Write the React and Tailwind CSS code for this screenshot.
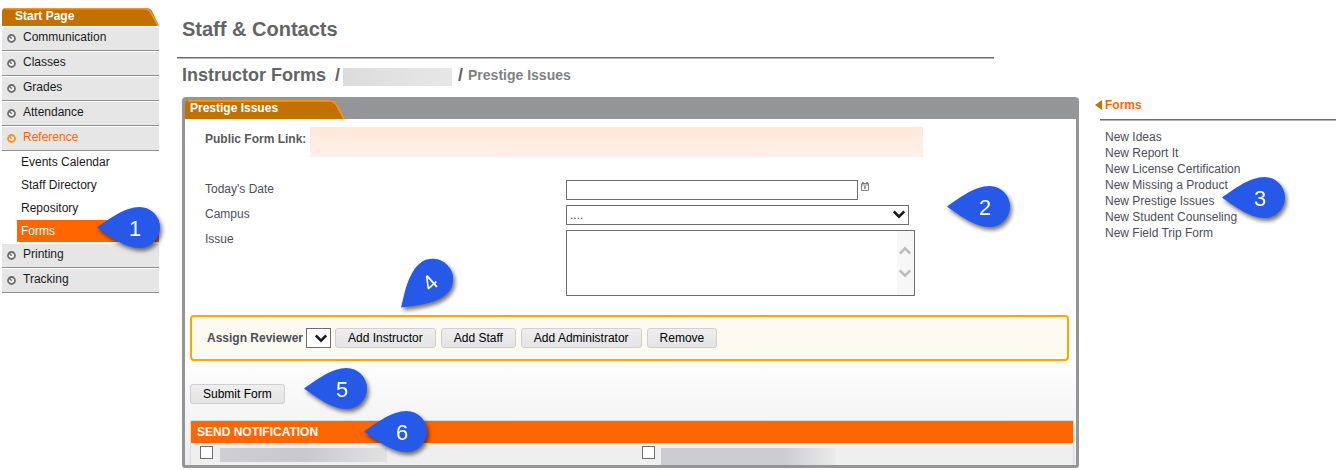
const MENU = [
  { label: 'Communication' },
  { label: 'Classes' },
  { label: 'Grades' },
  { label: 'Attendance' },
  {
    label: 'Reference',
    active: true,
    children: ['Events Calendar', 'Staff Directory', 'Repository', 'Forms'],
  },
  { label: 'Printing' },
  { label: 'Tracking' },
]

const FORMS = [
  'New Ideas',
  'New Report It',
  'New License Certification',
  'New Missing a Product',
  'New Prestige Issues',
  'New Student Counseling',
  'New Field Trip Form',
]

const REVIEWER_ACTIONS = ['Add Instructor', 'Add Staff', 'Add Administrator', 'Remove']

// Numbered callout; the tip is at the left, half way down
function Pin({ number, className, rotate }) {
  return (
    <span className={`absolute z-10 pointer-events-none drop-shadow-[2px_3px_2px_rgba(0,0,0,0.55)] ${className}`}>
      <svg width="63" height="41" viewBox="0 0 63 41" className={`block ${rotate || ''}`}>
        <path
          d="M0 20.5C12 12 28 0 42.5 0a20.5 20.5 0 0 1 0 41C28 41 12 29 0 20.5Z"
          fill="#2659e8"
        />
        <text x="38" y="29" textAnchor="middle" fill="#fff" fontSize="22" fontFamily="'Liberation Sans', sans-serif">
          {number}
        </text>
      </svg>
    </span>
  )
}

function Bullet({ active }) {
  const color = active ? '#f7931e' : '#6d6e71'
  return (
    <svg width="9" height="9" viewBox="0 0 9 9" className="shrink-0">
      <circle cx="4.5" cy="4.5" r="3.5" fill="#f8f8f8" stroke={color} strokeWidth="1.8" />
      <path d="M0 0h2.6L0 2.6Z" fill="#e6e6e6" />
      <path d="M1.6 1.6l3.2 3.2" stroke={color} strokeWidth="1.5" />
    </svg>
  )
}

function Chevron({ className, up }) {
  return (
    <svg width="12" height="9" viewBox="0 0 12 9" className={className}>
      <path
        d={up ? 'M0.8 7.6L6 2.4l5.2 5.2' : 'M0.8 1.4L6 6.6l5.2-5.2'}
        fill="none"
        stroke="currentColor"
        strokeWidth="2.6"
      />
    </svg>
  )
}

function Rule({ className }) {
  return <div className={`h-[2px] border-t border-t-[#6d6e71] bg-[#b4b4b6] ${className || ''}`} />
}

function FormButton({ children, type = 'button' }) {
  return (
    <button
      type={type}
      className="h-5 px-3 rounded-[3px] border border-[#d0d0d2] bg-linear-to-b from-[#eeeeee] to-[#e4e4e4] leading-[18px] text-black whitespace-nowrap"
    >
      {children}
    </button>
  )
}

function Sidebar() {
  return (
    <nav className="w-[157px] shrink-0 pt-2 text-[#1a1a1a]">
      <div className="relative h-[18px]">
        <svg className="absolute inset-0 w-full h-full" viewBox="0 0 157 18" preserveAspectRatio="none">
          <path d="M0 18V4q0-4 4-4h140q4 0 6 3l7 15Z" fill="#c27100" />
          <path d="M3 0.8h139q5 0 7 4l7 13" fill="none" stroke="#f7931e" strokeWidth="1.6" />
        </svg>
        <a href="#start" className="relative block pl-[13px] leading-4 font-bold text-white">Start Page</a>
      </div>
      <ul>
        {MENU.map((item) => (
          <li key={item.label}>
            <a
              href="#menu"
              className={`flex items-center gap-[7px] h-[25px] pl-[5px] border-t border-t-white border-b border-b-[#8f9093] bg-[#e6e6e6] ${item.active ? 'text-[#ff6600]' : ''}`}
            >
              <Bullet active={item.active} />
              <span className="pb-[3px]">{item.label}</span>
            </a>
            {item.children && (
              <ul className="pl-[15px]">
                {item.children.map((child) => (
                  <li key={child} className="relative h-[23px]">
                    <a
                      href="#sub"
                      className={`block h-[22px] pl-1 leading-[22px] ${child === 'Forms' ? 'bg-[#ff6600] text-white' : ''}`}
                    >
                      {child}
                    </a>
                    {child === 'Forms' && <Pin number="1" className="left-20 -top-[13px]" />}
                  </li>
                ))}
              </ul>
            )}
          </li>
        ))}
      </ul>
    </nav>
  )
}

function FieldRow({ id, label, children }) {
  return (
    <div className="flex items-start">
      <label htmlFor={id} className="w-[361px] shrink-0 leading-[18px]">{label}</label>
      {children}
    </div>
  )
}

function FormFields() {
  return (
    <div className="relative flex flex-col gap-[5px] mt-[23px] pl-[15px]">
      <FieldRow id="date" label="Today's Date">
        <input id="date" type="text" className="w-[292px] h-5 px-1 border border-[#6d6e71] bg-white" />
        <svg width="8" height="9" viewBox="0 0 8 9" className="ml-[3px] mt-[2px]">
          <path d="M0.5 1.5h7v7h-7zM0.5 3h7" fill="none" stroke="#808184" />
          <path d="M2 0v2M6 0v2M4 4v3" stroke="#6d6e71" strokeWidth="1.4" />
        </svg>
      </FieldRow>
      <FieldRow id="campus" label="Campus">
        <div className="relative">
          <select id="campus" className="block appearance-none w-[343px] h-5 pl-[3px] border border-[#6d6e71] bg-white leading-[18px]">
            <option>....</option>
          </select>
          <Chevron className="absolute right-1 top-[5px] text-[#1a1a1a] pointer-events-none" />
        </div>
      </FieldRow>
      <FieldRow id="issue" label="Issue">
        <div className="flex w-[349px] h-[66px] border border-[#6d6e71]">
          <textarea id="issue" className="flex-1 resize-none bg-white outline-none" />
          <div className="flex flex-col gap-[14px] w-[17px] pl-[2px] pt-[15px] bg-[#f7f7f7] text-[#bdbdbd]">
            <Chevron up />
            <Chevron />
          </div>
        </div>
      </FieldRow>
      <Pin number="2" className="left-[757px] top-[6px]" />
    </div>
  )
}

function Notifications() {
  return (
    <fieldset className="relative mt-4 mr-[2px] border border-b-0 border-[#d9d9db] bg-[#efefef]">
      <div className="h-[22px] pl-[6px] bg-[#ff6600] font-bold leading-[22px] text-white">SEND NOTIFICATION</div>
      <div className="grid grid-cols-2 h-[22px]">
        <div className="flex items-start pl-[9px] pt-[3px]">
          <input type="checkbox" aria-label="First recipient" className="appearance-none size-[13px] border border-[#6d6e71] bg-white" />
          <div className="w-[167px] h-[14px] ml-[7px] mt-[2px] bg-linear-to-r from-[#cfcfd3] via-[#c9c9cd] to-[#e2e2e3]" />
        </div>
        <div className="flex items-start pl-[10px] pt-[3px]">
          <input type="checkbox" aria-label="Second recipient" className="appearance-none size-[13px] border border-[#6d6e71] bg-white" />
          <div className="w-[175px] h-[17px] ml-[6px] mt-[2px] bg-linear-to-r from-[#cdcdd1] from-70% to-[#ebebeb]" />
        </div>
      </div>
      <Pin number="6" className="left-[173px] -top-[10px]" />
    </fieldset>
  )
}

function FormPanel() {
  return (
    <section className="mt-2 ml-[5px] rounded border-[3px] border-[#939598] bg-[#939598] shadow-[0_1px_0_#c8c8ca]">
      <div className="relative w-[160px] h-[19px]">
        <svg className="absolute inset-0" width="160" height="19" viewBox="0 0 160 19">
          <path d="M0 19V4q0-4 4-4h141q4 0 7 5l8 14Z" fill="#c27100" />
          <path d="M3 0.9h141q5 0 8 5l7 13" fill="none" stroke="#f7931e" strokeWidth="1.8" />
        </svg>
        <h3 className="relative pl-[5px] leading-4 font-bold text-white">Prestige Issues</h3>
      </div>

      <form className="pl-[5px] pt-2 bg-linear-to-b from-white from-68% to-[#ededee]">
        <div className="flex pl-[15px]">
          <p className="w-[105px] leading-6 font-bold text-[#58595b] whitespace-nowrap">Public Form Link:</p>
          <div className="w-[613px] h-[30px] bg-linear-to-b from-[#ffe8da] to-[#fff0e8]" />
        </div>

        <FormFields />

        <div className="relative flex items-center mt-[19px] mr-[7px] h-[46px] pl-[15px] rounded border-2 border-[#ffa500] bg-linear-to-b from-[#fefaf3] to-[#fafaee]">
          <label htmlFor="reviewer" className="w-[99px] shrink-0 font-bold whitespace-nowrap">Assign Reviewer</label>
          <div className="relative mr-1">
            <select id="reviewer" className="block appearance-none w-[25px] h-5 border border-[#6d6e71] bg-white" />
            <Chevron className="absolute right-1 top-[6px] text-[#1a1a1a] pointer-events-none" />
          </div>
          <div className="flex gap-[5px]">
            {REVIEWER_ACTIONS.map((action) => (
              <FormButton key={action}>{action}</FormButton>
            ))}
          </div>
          <Pin number="4" className="left-[201px] -top-[51px]" rotate="-rotate-[42deg]" />
        </div>

        <div className="relative flex mt-[23px]">
          <FormButton type="submit">Submit Form</FormButton>
          <Pin number="5" className="left-[114px] -top-4" />
        </div>

        <Notifications />
      </form>
    </section>
  )
}

function FormsAside() {
  return (
    <aside className="w-[241px] shrink-0 pt-[96px]">
      <h2 className="flex items-center gap-[3px] leading-[18px] font-bold text-[#ff6600]">
        <svg width="7" height="10" viewBox="0 0 7 10">
          <path d="M7 0v10L0 5Z" fill="#c27100" />
        </svg>
        Forms
      </h2>
      <Rule className="mt-[5px] ml-[5px]" />
      <ul className="mt-2 pl-[10px]">
        {FORMS.map((name) => (
          <li key={name} className="relative leading-4">
            <a href="#form">{name}</a>
            {name === 'New Prestige Issues' && <Pin number="3" className="left-[117px] -top-4" />}
          </li>
        ))}
      </ul>
    </aside>
  )
}

export default function App() {
  return (
    <div className="flex items-start px-[2px] bg-white text-xs text-[#4d4d5a] font-['Liberation_Sans',Arial,sans-serif]">
      <Sidebar />
      <main className="flex-1 min-w-0 ml-[18px] mr-4">
        <h1 className="pl-[5px] pt-[17px] leading-6 text-xl font-bold text-[#636466]">Staff &amp; Contacts</h1>
        <Rule className="mt-4 mr-[85px]" />
        <h2 className="flex items-center h-7 mt-[2px] pl-[5px] text-lg font-bold text-[#636466]">
          <span className="w-[153px] whitespace-nowrap">Instructor Forms</span>
          <span>/</span>
          <span className="w-[109px] h-[18px] mt-1 ml-[3px] mr-[6px] bg-linear-to-r from-[#dcdcdd] to-[#e7e7e7]" />
          <span>/</span>
          <span className="ml-[5px] text-sm text-[#808184]">Prestige Issues</span>
        </h2>
        <FormPanel />
      </main>
      <FormsAside />
    </div>
  )
}
